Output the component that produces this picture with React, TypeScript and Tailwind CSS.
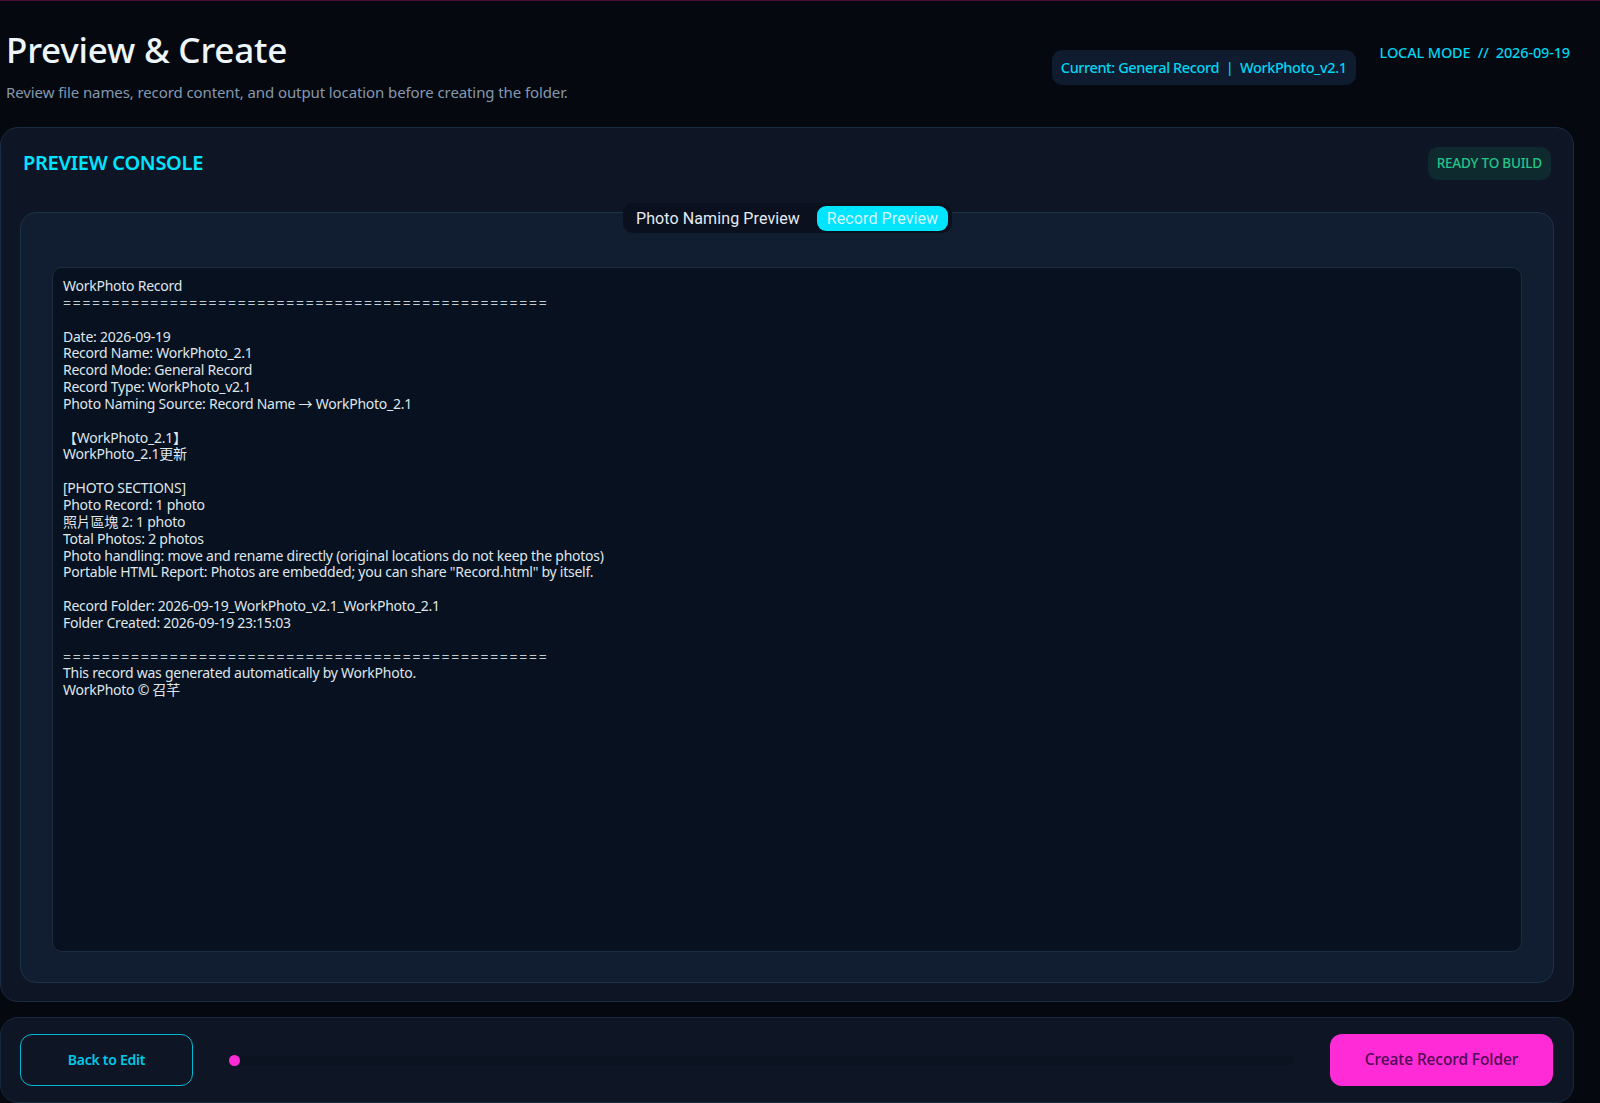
const rule = '=================================================='

const headLines = `WorkPhoto Record
`;

const bodyLines = `

Date: 2026-09-19
Record Name: WorkPhoto_2.1
Record Mode: General Record
Record Type: WorkPhoto_v2.1
Photo Naming Source: Record Name → WorkPhoto_2.1

【WorkPhoto_2.1】
WorkPhoto_2.1更新

[PHOTO SECTIONS]
Photo Record: 1 photo
照片區塊 2: 1 photo
Total Photos: 2 photos
Photo handling: move and rename directly (original locations do not keep the photos)
Portable HTML Report: Photos are embedded; you can share "Record.html" by itself.

Record Folder: 2026-09-19_WorkPhoto_v2.1_WorkPhoto_2.1
Folder Created: 2026-09-19 23:15:03

`;

const footLines = `
This record was generated automatically by WorkPhoto.
WorkPhoto © 召芊`;

export default function App() {
  return (
    <div className="flex h-[1103px] w-[1600px] flex-col overflow-hidden border-t border-[#4a0f38] bg-[#05080f] pb-px pr-[26px] font-['Noto_Sans','Noto_Sans_CJK_TC',sans-serif]">
      {/* Header */}
      <header className="flex h-[126px] shrink-0 items-start justify-between pl-[6px]">
        <div>
          <h1 className="mt-[27px] text-[35px] leading-[44px] font-medium tracking-[-0.2px] text-[#eef6fb]">Preview &amp; Create</h1>
          <p className="mt-[8px] text-[15px] leading-[24px] tracking-[-0.1px] text-[#8499ae]">
            Review file names, record content, and output location before creating the folder.
          </p>
        </div>
        <div className="mt-[41px] flex items-start">
          <div className="mt-[8px] flex h-[35px] items-center rounded-[10px] bg-[#0f1c30] px-[9px] text-[14.5px] font-medium tracking-[-0.4px] whitespace-pre text-[#00d5f0]">
            Current: General Record  |  WorkPhoto_v2.1
          </div>
          <div className="ml-[24px] mr-[4px] text-[14.5px] leading-[21px] font-medium tracking-[-0.15px] whitespace-pre text-[#00d5f0]">
            LOCAL MODE  //  2026-09-19
          </div>
        </div>
      </header>

      {/* Preview console */}
      <section className="flex h-[875px] shrink-0 flex-col rounded-[18px] border border-[#1a2c42] bg-[#0e1625] px-[19px] pb-[18px]">
        <div className="flex h-[84px] shrink-0 items-start justify-between">
          <h2 className="mt-[19px] ml-[3px] text-[20px] leading-[32px] font-semibold tracking-[-0.3px] text-[#00e5ff]">PREVIEW CONSOLE</h2>
          <div className="mt-[19px] mr-[3px] flex h-[33px] items-center rounded-[10px] bg-[#0f2a2e] px-[9px] text-[13.5px] font-medium tracking-[-0.2px] text-[#22c58a]">
            READY TO BUILD
          </div>
        </div>

        <div className="relative flex flex-1 flex-col rounded-[16px] border border-[#1c3348] bg-[#111d31] px-[31px] pt-[54px] pb-[30px]">
          <div className="absolute top-[-10px] left-[602px] flex h-[30px] w-[329px] items-center rounded-[10px] bg-[#0a101e] pl-[13px] pr-[4px] font-['Roboto',sans-serif] text-[16px] tracking-[0.1px]">
            <span className="w-[181px] pt-px text-[#e4ebf2]">Photo Naming Preview</span>
            <span className="flex h-[25px] flex-1 items-center justify-center rounded-[9px] bg-[#00e5ff] pt-px text-[#d8f6ff]">Record Preview</span>
          </div>
          <pre className="flex-1 rounded-[10px] border border-[#1b2d42] bg-[#08111f] pt-[10px] pl-[10px] font-['Noto_Sans','Noto_Sans_CJK_TC',sans-serif] text-[14px] leading-[16.85px] tracking-[-0.25px] whitespace-pre-wrap text-[#dfe6ec]">
            {headLines}
            <span className="tracking-[1.7px] text-[#c4ccd4]">{rule}</span>
            {bodyLines}
            <span className="tracking-[1.7px] text-[#c4ccd4]">{rule}</span>
            {footLines}
          </pre>
        </div>
      </section>

      {/* Action bar */}
      <footer className="mt-[15px] flex h-[86px] shrink-0 items-center gap-[36px] rounded-[18px] border border-[#16293c] bg-[#0e1625] pl-[19px] pr-[20px]">
        <button className="h-[52px] w-[173px] rounded-[12px] border-[1.5px] border-[#00b8d4] pb-[2px] text-[14px] font-semibold tracking-[-0.25px] text-[#00c8e6]">
          Back to Edit
        </button>
        <div className="relative flex h-[9px] flex-1 items-center rounded-full bg-[#0b1320]">
          <span className="absolute left-0 h-[11px] w-[11px] rounded-full bg-[#ff2bd6]" />
        </div>
        <button className="h-[52px] w-[223px] rounded-[12px] bg-[#ff2bd6] pb-px text-[15.5px] font-medium tracking-[-0.1px] text-[#4e0a52]">
          Create Record Folder
        </button>
      </footer>
    </div>
  );
}
